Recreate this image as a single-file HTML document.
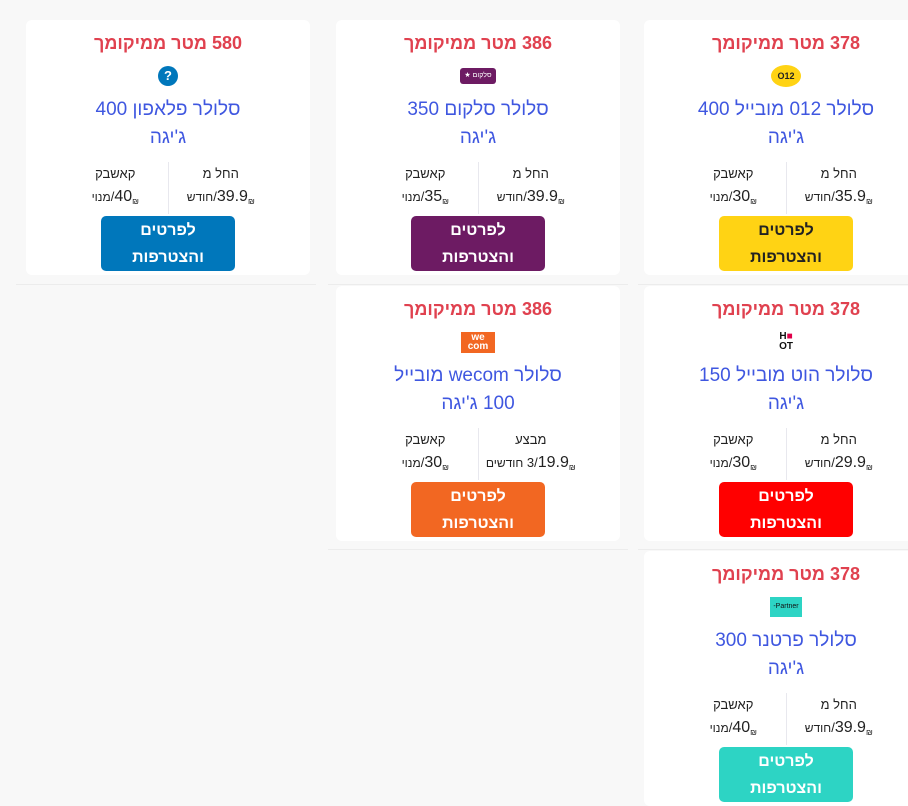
<!DOCTYPE html>
<html><head><meta charset="utf-8"><style>
body{margin:0;width:908px;height:804px;overflow:hidden;background:#f8f8f8;font-family:"Liberation Sans","DejaVu Sans",sans-serif;position:relative}
.card{position:absolute;width:284px;height:255px;background:#fff;border-radius:6px;text-align:center;direction:rtl}
.t{position:absolute;top:12px;left:0;right:0;color:#e0414f;font-weight:bold;font-size:18px;line-height:22px}
.logo{position:absolute;top:42px;left:0;right:0;height:28px;display:flex;justify-content:center;align-items:center}
.n{position:absolute;top:76px;left:52px;right:52px;color:#3f57e0;font-size:19px;line-height:28px}
.st{position:absolute;top:142px;left:37px;width:210px;height:52px;display:flex}
.st div{flex:1;font-size:13px;color:#222;line-height:23px}
.st div:first-child{border-left:1px solid #e8e8ee}
.v{display:inline-flex;direction:ltr;align-items:baseline;white-space:pre}
.v i{font-style:normal;font-size:12px}
.st b{font-weight:normal;font-size:16px}
.st s{text-decoration:none;font-size:8px;position:relative;top:3px}
.btn{position:absolute;top:196px;left:75px;width:134px;height:55px;border-radius:5px;color:#fff;font-weight:bold;font-size:16px;line-height:27px;display:flex;flex-direction:column;justify-content:center}
.line{position:absolute;height:1px;background:#ececec}
</style></head><body>
<div class="line" style="left:16px;width:300px;top:284px"></div>
<div class="line" style="left:328px;width:300px;top:284px"></div>
<div class="line" style="left:328px;width:300px;top:549px"></div>
<div class="line" style="left:638px;width:270px;top:284px"></div>
<div class="line" style="left:638px;width:270px;top:549px"></div>

<div class="card" style="left:644px;top:20px">
<div class="t">378 מטר ממיקומך</div>
<div class="logo"><div style="width:30px;height:22px;border-radius:50%;background:#ffd314;font-size:9px;font-weight:bold;line-height:22px;color:#222;direction:ltr">O12</div></div>
<div class="n">סלולר 012 מובייל 400 ג'יגה</div>
<div class="st"><div>החל מ<br><span class="v"><i>חודש</i><span>/</span><b>35.9</b><s>₪</s></span></div><div>קאשבק<br><span class="v"><i>מנוי</i><span>/</span><b>30</b><s>₪</s></span></div></div>
<div class="btn" style="background:#ffd314;color:#222"><span>לפרטים</span><span>והצטרפות</span></div>
</div>
<div class="card" style="left:336px;top:20px">
<div class="t">386 מטר ממיקומך</div>
<div class="logo"><div style="width:36px;height:16px;border-radius:3px;background:#6d1b63;color:#fff;font-size:7px;line-height:16px">סלקום ★</div></div>
<div class="n">סלולר סלקום 350 ג'יגה</div>
<div class="st"><div>החל מ<br><span class="v"><i>חודש</i><span>/</span><b>39.9</b><s>₪</s></span></div><div>קאשבק<br><span class="v"><i>מנוי</i><span>/</span><b>35</b><s>₪</s></span></div></div>
<div class="btn" style="background:#6d1b63"><span>לפרטים</span><span>והצטרפות</span></div>
</div>
<div class="card" style="left:26px;top:20px">
<div class="t">580 מטר ממיקומך</div>
<div class="logo"><div style="width:20px;height:20px;border-radius:50%;background:#0077bb;color:#fff;font-size:13px;font-weight:bold;line-height:20px">?</div></div>
<div class="n">סלולר פלאפון 400 ג'יגה</div>
<div class="st"><div>החל מ<br><span class="v"><i>חודש</i><span>/</span><b>39.9</b><s>₪</s></span></div><div>קאשבק<br><span class="v"><i>מנוי</i><span>/</span><b>40</b><s>₪</s></span></div></div>
<div class="btn" style="background:#0077bb"><span>לפרטים</span><span>והצטרפות</span></div>
</div>
<div class="card" style="left:644px;top:286px">
<div class="t">378 מטר ממיקומך</div>
<div class="logo"><div style="font-size:10px;font-weight:900;line-height:10px;color:#111;direction:ltr">H<span style="color:#e0004a">■</span><br>OT</div></div>
<div class="n">סלולר הוט מובייל 150 ג'יגה</div>
<div class="st"><div>החל מ<br><span class="v"><i>חודש</i><span>/</span><b>29.9</b><s>₪</s></span></div><div>קאשבק<br><span class="v"><i>מנוי</i><span>/</span><b>30</b><s>₪</s></span></div></div>
<div class="btn" style="background:#ff0000"><span>לפרטים</span><span>והצטרפות</span></div>
</div>
<div class="card" style="left:336px;top:286px">
<div class="t">386 מטר ממיקומך</div>
<div class="logo"><div style="width:34px;height:20px;background:#f26722;color:#fff;font-size:10px;font-weight:900;line-height:9px;direction:ltr;padding-top:1px">we<br>com</div></div>
<div class="n">סלולר wecom מובייל 100 ג'יגה</div>
<div class="st"><div>מבצע<br><span class="v"><i>חודשים</i><span> 3/</span><b>19.9</b><s>₪</s></span></div><div>קאשבק<br><span class="v"><i>מנוי</i><span>/</span><b>30</b><s>₪</s></span></div></div>
<div class="btn" style="background:#f26722"><span>לפרטים</span><span>והצטרפות</span></div>
</div>
<div class="card" style="left:644px;top:551px">
<div class="t">378 מטר ממיקומך</div>
<div class="logo"><div style="width:32px;height:20px;background:#2dd4c4;color:#111;font-size:7px;line-height:20px;direction:ltr">-Partner</div></div>
<div class="n">סלולר פרטנר 300 ג'יגה</div>
<div class="st"><div>החל מ<br><span class="v"><i>חודש</i><span>/</span><b>39.9</b><s>₪</s></span></div><div>קאשבק<br><span class="v"><i>מנוי</i><span>/</span><b>40</b><s>₪</s></span></div></div>
<div class="btn" style="background:#2dd4c4"><span>לפרטים</span><span>והצטרפות</span></div>
</div>
</body></html>
